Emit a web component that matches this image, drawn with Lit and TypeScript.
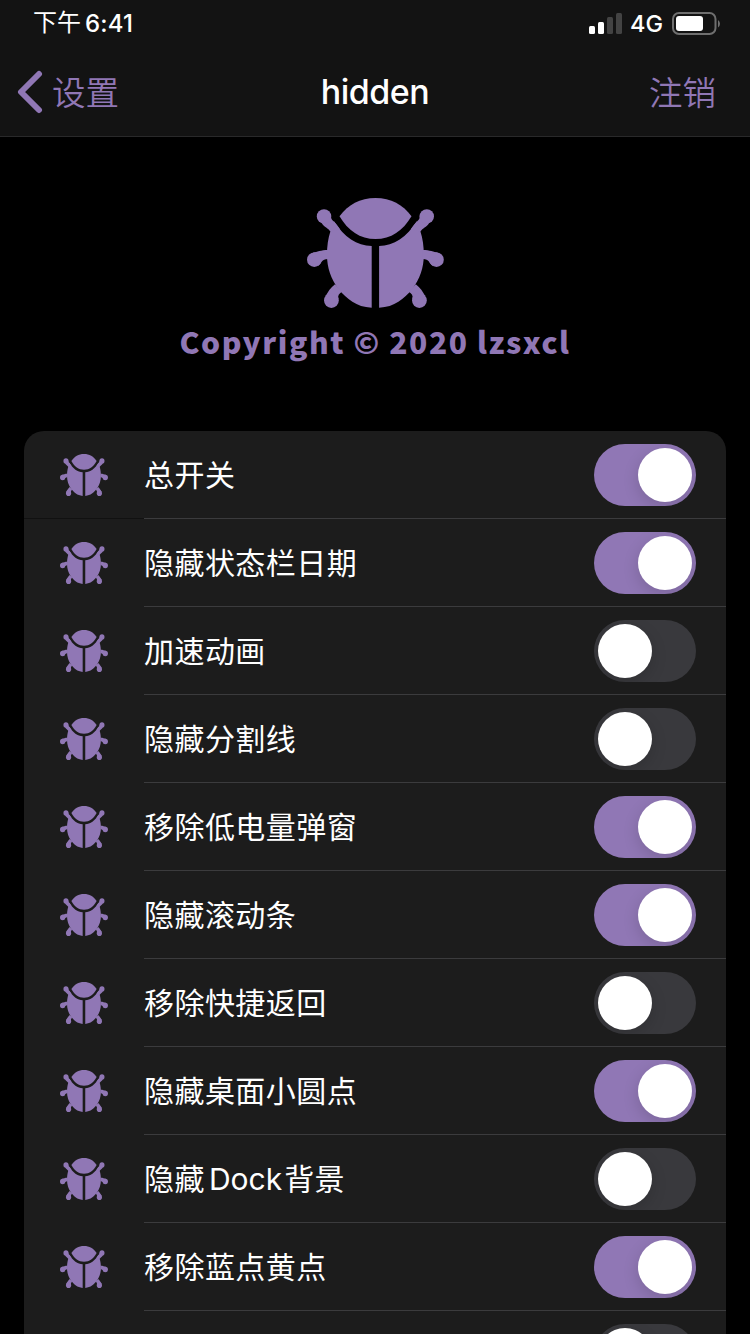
import { LitElement, html, css, svg } from "lit";
import { customElement, property } from "lit/decorators.js";

const bugHalf = () => svg`
  <path class="fill" d="M81.700 128C66 127.500 57 119 48.500 109.500C41 99 37 88 37 75C37 66 38 59 40.500 51L39 44L44 41C54 57 67 65.500 81.700 66Z"/>
  <path class="fill" d="M41.200 35C40.500 38.500 42.500 40 44 41.500C46 43 48 46 50 49L40.500 51.500C38 47.500 34.500 47.500 31.500 42.500Z"/>
  <path class="fill" d="M38 70C31 70 27 72 23 72.600L28 86C31.500 83.500 31.500 79 38 79Z"/>
  <path class="fill" d="M45 104.500C40.500 108 38 112 35.500 116.500L48.400 119C47.500 116 49 114 52 112Z"/>
  <circle class="fill" cx="34" cy="36.200" r="7.200"/>
  <circle class="fill" cx="24.300" cy="79.700" r="7.300"/>
  <circle class="fill" cx="41.400" cy="120.800" r="7.400"/>`;

@customElement("bug-icon")
class BugIcon extends LitElement {
  static styles = css`
    :host { display: block; }
    svg { display: block; width: 100%; height: 100%; }
    .fill { fill: #9077b5; }
  `;
  render() {
    return html`<svg viewBox="17 17.700 137 110.600" preserveAspectRatio="none">
      <path class="fill" d="M49.500 36C58 24.500 70 17.700 85.500 17.700C101 17.700 113 24.500 121.500 36C113 50.500 101 59 85.500 59C70 59 58 50.500 49.500 36Z"/>
      ${bugHalf()}
      <g transform="translate(170.800 0) scale(-1 1)">${bugHalf()}</g>
    </svg>`;
  }
}

@customElement("toggle-switch")
class ToggleSwitch extends LitElement {
  @property({ type: Boolean }) on = false;
  static styles = css`
    :host { display: block; }
    .track { display: flex; align-items: center; box-sizing: border-box; width: 102px; height: 62px; padding: 0 4px; border-radius: 31px; background: #39393d; overflow: hidden; }
    .track.on { background: #9077b5; justify-content: flex-end; }
    .knob { width: 54px; height: 54px; border-radius: 50%; background: #fff; box-shadow: 0 5px 16px rgba(0, 0, 0, 0.15); }
  `;
  render() {
    return html`<div class="track ${this.on ? "on" : ""}"><div class="knob"></div></div>`;
  }
}

const ROWS: [unknown, boolean][] = [
  ["总开关", true],
  ["隐藏状态栏日期", true],
  ["加速动画", false],
  ["隐藏分割线", false],
  ["移除低电量弹窗", true],
  ["隐藏滚动条", true],
  ["移除快捷返回", false],
  ["隐藏桌面小圆点", true],
  [html`隐藏<span class="latin">Dock</span>背景`, false],
  ["移除蓝点黄点", true],
  ["", false],
];

@customElement("app-root")
class AppRoot extends LitElement {
  static styles = css`
    :host { display: block; width: 750px; height: 1334px; overflow: hidden; background: #000; color: #fff; font-family: Inter, "Noto Sans CJK SC", sans-serif; }
    .top { box-sizing: border-box; height: 137px; background: #131313; border-bottom: 1px solid #29292a; }
    .status { display: flex; justify-content: space-between; align-items: center; height: 48px; padding: 0 30px 0 33px; font-size: 24px; font-weight: 500; }
    .time { display: flex; gap: 4px; align-items: center; line-height: 48px; }
    .time .cjk { font-weight: 400; line-height: 43px; padding-bottom: 3px; }
    .time .clock { letter-spacing: 0.200px; }
    .right { display: flex; align-items: center; gap: 8px; }
    .right .net { margin-right: 1px; font-size: 23.500px; line-height: 28px; padding-bottom: 1px; }
    .right svg { display: block; }
    .nav { display: grid; grid-template-columns: 1fr auto 1fr; align-items: center; height: 88px; padding: 0 17px; }
    .link { display: flex; align-items: center; gap: 9px; color: #9077b5; font-size: 33.500px; line-height: 44px; font-weight: 350; font-family: "Noto Sans CJK SC DemiLight", "Noto Sans CJK SC", sans-serif; }
    .link span { padding-bottom: 3px; }
    .link.end { justify-content: flex-end; padding-right: 17px; }
    .title { font-size: 34px; font-weight: 500; line-height: 44px; letter-spacing: -0.500px; }
    .hero { display: flex; flex-direction: column; align-items: center; height: 294px; box-sizing: border-box; padding-top: 61px; }
    .logo { width: 137px; height: 110px; }
    .copy { margin-top: 9px; line-height: 48px; font-family: "Noto Sans CJK SC", sans-serif; font-weight: 900; font-size: 30px; letter-spacing: 1.550px; color: #9077b5; white-space: nowrap; }
    .list { margin: 0 24px; border-radius: 20px 20px 0 0; background: #1c1c1c; overflow: hidden; }
    .row { display: flex; height: 88px; box-sizing: border-box; padding-left: 36px; }
    .row:first-child { background: linear-gradient(#111, #111) left bottom / 120px 1px no-repeat; }
    .ico { width: 48px; height: 42px; margin: 23px 36px 0 0; }
    .cell { flex: 1; display: flex; align-items: center; justify-content: space-between; box-sizing: border-box; border-bottom: 1px solid #3b3b3d; padding-right: 30px; font-size: 30px; font-weight: 400; letter-spacing: 0.450px; }
    .label { padding-bottom: 4px; }
    .latin { margin: 0 2px 0 4px; letter-spacing: 0; }
  `;
  render() {
    return html`
      <div class="top">
        <div class="status">
          <div class="time"><span class="cjk">下午</span><span class="clock">6:41</span></div>
          <div class="right">
            <svg width="33" height="22" viewBox="0 0 33 22"><g fill="#fff"><rect x="0" y="13" width="6" height="8" rx="1.500"/><rect x="9" y="9" width="6" height="12" rx="1.500"/></g><g fill="#434343"><rect x="18" y="4" width="6" height="17" rx="1.500"/><rect x="27" y="0" width="6" height="21" rx="1.500"/></g></svg>
            <span class="net">4G</span>
            <svg width="48" height="24" viewBox="0 0 48 24"><rect x="1" y="1" width="42.500" height="21" rx="6" fill="none" stroke="#6f6f6f" stroke-width="2"/><rect x="4" y="4" width="27" height="15" rx="3" fill="#fff"/><path d="M46 8v7.500q2-1.500 2-3.700t-2-3.800z" fill="#6f6f6f"/></svg>
          </div>
        </div>
        <div class="nav">
          <div class="link"><svg width="26" height="44" viewBox="0 0 26 44"><path d="M22 4L4 22L22 40" fill="none" stroke="#9077b5" stroke-width="6" stroke-linecap="round" stroke-linejoin="round"/></svg><span>设置</span></div>
          <div class="title">hidden</div>
          <div class="link end"><span>注销</span></div>
        </div>
      </div>
      <div class="hero">
        <bug-icon class="logo"></bug-icon>
        <div class="copy">Copyright © 2020 lzsxcl</div>
      </div>
      <div class="list">
        ${ROWS.map(([label, on]) => html`<div class="row">
          <bug-icon class="ico"></bug-icon>
          <div class="cell"><span class="label">${label}</span><toggle-switch ?on=${on}></toggle-switch></div>
        </div>`)}
      </div>`;
  }
}
